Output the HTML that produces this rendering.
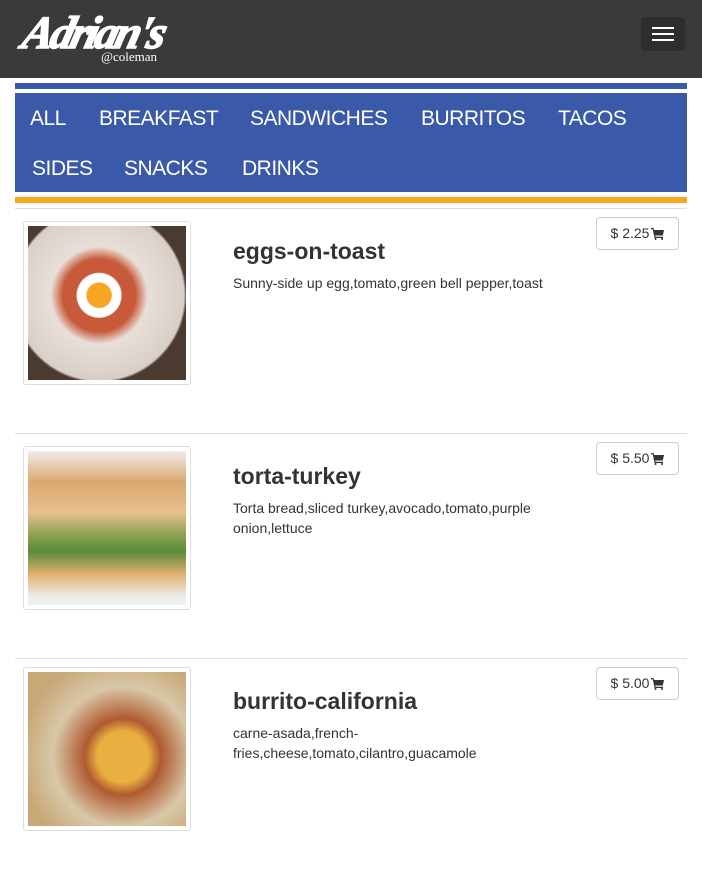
<!DOCTYPE html>
<html><head><style>
body{margin:0;width:702px;height:873px;background:#fff;font-family:"Liberation Sans",sans-serif;overflow:hidden;position:relative}
.hdr{position:absolute;left:0;top:0;width:702px;height:78px;background:#3a3a3a}
.logo{position:absolute;left:24px;top:6px;color:#fff;font:italic bold 46px "Liberation Serif",serif;letter-spacing:-3px;transform:skewX(-14deg);-webkit-text-stroke:1.5px #fff}
.sub{position:absolute;left:101px;top:49px;color:#fff;font:13px "Liberation Serif",serif}
.burger{position:absolute;left:641px;top:17px;width:44px;height:34px;background:#2e2e2e;border-radius:4px}
.burger i{position:absolute;left:11px;width:22px;height:2px;background:#fff}
.b1{position:absolute;left:15px;top:83px;width:672px;height:6px;background:#3a59a8}
.nav{position:absolute;left:15px;top:93px;width:672px;height:99px;background:#3a59a8}
.nav span{position:absolute;color:#fff;font-size:21px;letter-spacing:-0.5px}
.b2{position:absolute;left:15px;top:197px;width:672px;height:6px;background:#f7a81b}
.sep{position:absolute;left:15px;width:672px;height:1px;background:#ddd}
.img{position:absolute;left:23px;width:166px;height:162px;border:1px solid #ddd;border-radius:3px;background:#fff}
.img div{position:absolute;left:4px;top:4px;width:158px;height:154px}
.t{position:absolute;left:233px;font-size:23px;font-weight:bold;color:#333}
.d{position:absolute;left:233px;width:320px;font-size:14px;line-height:20px;color:#333}
.p{position:absolute;left:596px;width:81px;height:31px;border:1px solid #ccc;border-radius:4px;font-size:14px;color:#333;line-height:31px;text-align:center}
.p svg{vertical-align:-2px;margin-left:2px}
</style></head><body>
<div class="hdr"><div class="logo">Adrian's</div><div class="sub">@coleman</div>
<div class="burger"><i style="top:10px"></i><i style="top:16px"></i><i style="top:22px"></i></div></div>
<div class="b1"></div>
<div class="nav">
<span style="left:15px;top:14px">ALL</span><span style="left:84px;top:14px">BREAKFAST</span><span style="left:235px;top:14px">SANDWICHES</span><span style="left:406px;top:14px">BURRITOS</span><span style="left:543px;top:14px">TACOS</span>
<span style="left:17px;top:64px">SIDES</span><span style="left:109px;top:64px">SNACKS</span><span style="left:227px;top:64px">DRINKS</span></div>
<div class="b2"></div>
<div class="sep" style="top:208px"></div>
<div class="img" style="top:221px"><div style="background:radial-gradient(circle at 45% 45%,#f5a623 0 10%,#fff 11% 18%,#c85a3a 19% 30%,#e8dfd8 40%,#d8cfc8 70%,#4a3a30 72%)"></div></div>
<div class="t" style="top:238px">eggs-on-toast</div>
<div class="d" style="top:273px">Sunny-side up egg,tomato,green bell pepper,toast</div>
<div class="p" style="top:217px">$ 2.25<svg width="13" height="12" viewBox="0 0 13 12"><path d="M0 0h2.5l.6 2H13l-1.2 5.5H4.2l.3 1.3H12V10H3.6L1.7 1.3H0z" fill="#333"/><circle cx="4.5" cy="11" r="1" fill="#333"/><circle cx="11" cy="11" r="1" fill="#333"/></svg></div>
<div class="sep" style="top:433px"></div>
<div class="img" style="top:446px"><div style="background:linear-gradient(#f0ece8 0,#d9a870 20%,#e8c090 40%,#8aa050 55%,#5a8a3a 65%,#e0b070 80%,#eee 95%)"></div></div>
<div class="t" style="top:463px">torta-turkey</div>
<div class="d" style="top:498px">Torta bread,sliced turkey,avocado,tomato,purple onion,lettuce</div>
<div class="p" style="top:442px">$ 5.50<svg width="13" height="12" viewBox="0 0 13 12"><path d="M0 0h2.5l.6 2H13l-1.2 5.5H4.2l.3 1.3H12V10H3.6L1.7 1.3H0z" fill="#333"/><circle cx="4.5" cy="11" r="1" fill="#333"/><circle cx="11" cy="11" r="1" fill="#333"/></svg></div>
<div class="sep" style="top:658px"></div>
<div class="img" style="top:667px"><div style="background:radial-gradient(circle at 60% 55%,#e8b040 0 20%,#b05a30 30%,#d8c8a8 55%,#c9a878 80%)"></div></div>
<div class="t" style="top:688px">burrito-california</div>
<div class="d" style="top:723px">carne-asada,french-<br>fries,cheese,tomato,cilantro,guacamole</div>
<div class="p" style="top:667px">$ 5.00<svg width="13" height="12" viewBox="0 0 13 12"><path d="M0 0h2.5l.6 2H13l-1.2 5.5H4.2l.3 1.3H12V10H3.6L1.7 1.3H0z" fill="#333"/><circle cx="4.5" cy="11" r="1" fill="#333"/><circle cx="11" cy="11" r="1" fill="#333"/></svg></div>
</body></html>
